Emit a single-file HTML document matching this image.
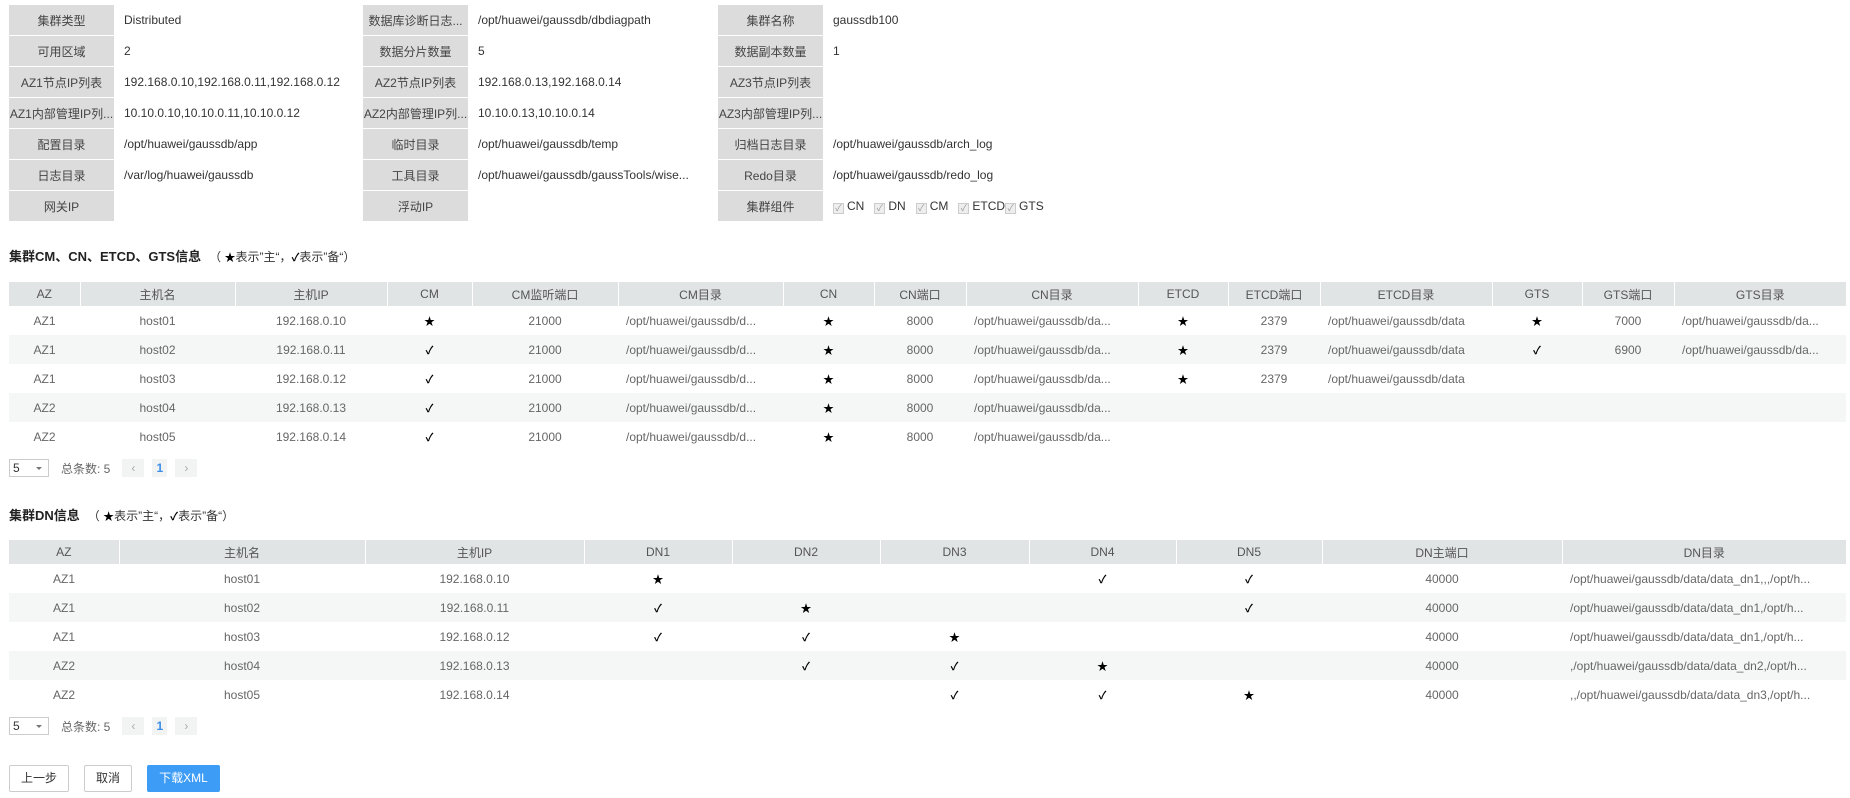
<!DOCTYPE html>
<html><head><meta charset="utf-8"><style>
*{box-sizing:border-box;margin:0;padding:0}
body{width:1850px;height:798px;background:#fff;font-family:"Liberation Sans","Noto Sans CJK SC",sans-serif;font-size:12px;color:#333;position:relative;overflow:hidden}
.info{position:absolute;left:9px;top:4px;border-collapse:separate;border-spacing:0 1px;table-layout:fixed}
.info td{height:30px;white-space:nowrap;overflow:hidden;text-overflow:ellipsis}
.info td.l{background:#dcdcdc;text-align:center;color:#444}
.info td.v{padding-left:10px;color:#333}
.cb{color:#aaa}
.cb span{display:inline-block;width:11px;height:11px;border:1px solid #ccc;background:#eee;font-size:9px;line-height:9px;text-align:center;color:#999;margin-right:3px;vertical-align:-1px}
.title{position:absolute;left:9px;font-weight:bold;font-size:13px;color:#222}
.title i{font-style:normal;font-weight:normal;color:#333;font-size:12px;margin-left:8px}
table.g{position:absolute;left:9px;border-collapse:collapse;table-layout:fixed}
table.g th{background:#e1e4e5;height:24px;font-weight:normal;color:#555;border-left:1px solid #fff;white-space:nowrap}
table.g th:first-child{border-left:none}
table.g td{height:29px;text-align:center;color:#666;white-space:nowrap;overflow:hidden;text-overflow:ellipsis}
table.g tr:nth-child(odd) td{background:#f5f7f7}
table.g td.p{text-align:left;padding-left:8px}
.st{color:#000 !important;font-size:11px}
.ck{color:#000 !important;font-size:11px;font-weight:bold}
.pg{position:absolute;left:9px;height:18px;display:flex;align-items:center;color:#666}
.sel{width:40px;height:18px;border:1px solid #ccc;position:relative;padding-left:3px;line-height:16px;color:#333}
.sel:after{content:"";position:absolute;right:6px;top:7px;border:3px solid transparent;border-top-color:#777}
.pb{width:22px;height:18px;background:#f2f4f4;text-align:center;line-height:18px;color:#aaa;margin-left:8px}
.btn{position:absolute;top:765px;height:27px;border:1px solid #ccc;border-radius:2px;background:#fff;text-align:center;line-height:25px;color:#333}
</style></head><body>
<table class="info">
<colgroup><col style="width:105px"><col style="width:249px"><col style="width:105px"><col style="width:250px"><col style="width:105px"><col style="width:250px"></colgroup>
<tr><td class="l">集群类型</td><td class="v">Distributed</td><td class="l">数据库诊断日志...</td><td class="v">/opt/huawei/gaussdb/dbdiagpath</td><td class="l">集群名称</td><td class="v">gaussdb100</td></tr>
<tr><td class="l">可用区域</td><td class="v">2</td><td class="l">数据分片数量</td><td class="v">5</td><td class="l">数据副本数量</td><td class="v">1</td></tr>
<tr><td class="l">AZ1节点IP列表</td><td class="v">192.168.0.10,192.168.0.11,192.168.0.12</td><td class="l">AZ2节点IP列表</td><td class="v">192.168.0.13,192.168.0.14</td><td class="l">AZ3节点IP列表</td><td class="v"></td></tr>
<tr><td class="l">AZ1内部管理IP列...</td><td class="v">10.10.0.10,10.10.0.11,10.10.0.12</td><td class="l">AZ2内部管理IP列...</td><td class="v">10.10.0.13,10.10.0.14</td><td class="l">AZ3内部管理IP列...</td><td class="v"></td></tr>
<tr><td class="l">配置目录</td><td class="v">/opt/huawei/gaussdb/app</td><td class="l">临时目录</td><td class="v">/opt/huawei/gaussdb/temp</td><td class="l">归档日志目录</td><td class="v">/opt/huawei/gaussdb/arch_log</td></tr>
<tr><td class="l">日志目录</td><td class="v">/var/log/huawei/gaussdb</td><td class="l">工具目录</td><td class="v">/opt/huawei/gaussdb/gaussTools/wise...</td><td class="l">Redo目录</td><td class="v">/opt/huawei/gaussdb/redo_log</td></tr>
<tr><td class="l">网关IP</td><td class="v"></td><td class="l">浮动IP</td><td class="v"></td><td class="l">集群组件</td><td class="v cb"><span>✓</span>CN&nbsp;&nbsp;&nbsp;<span>✓</span>DN&nbsp;&nbsp;&nbsp;<span>✓</span>CM&nbsp;&nbsp;&nbsp;<span>✓</span>ETCD<span>✓</span>GTS</td></tr>
</table>

<div class="title" style="top:246px">集群CM、CN、ETCD、GTS信息<i>（ <span class="st">★</span>表示”主“，<span class="ck">✓</span>表示”备“）</i></div>
<table class="g" style="top:282px;width:1837px">
<colgroup><col style="width:71px"><col style="width:155px"><col style="width:152px"><col style="width:85px"><col style="width:146px"><col style="width:165px"><col style="width:91px"><col style="width:92px"><col style="width:172px"><col style="width:90px"><col style="width:92px"><col style="width:172px"><col style="width:90px"><col style="width:92px"><col style="width:172px"></colgroup>
<tr><th>AZ</th><th>主机名</th><th>主机IP</th><th>CM</th><th>CM监听端口</th><th>CM目录</th><th>CN</th><th>CN端口</th><th>CN目录</th><th>ETCD</th><th>ETCD端口</th><th>ETCD目录</th><th>GTS</th><th>GTS端口</th><th>GTS目录</th></tr>
<tbody>
<tr style="display:none"></tr>
<tr><td>AZ1</td><td>host01</td><td>192.168.0.10</td><td class="st">★</td><td>21000</td><td class="p">/opt/huawei/gaussdb/d...</td><td class="st">★</td><td>8000</td><td class="p">/opt/huawei/gaussdb/da...</td><td class="st">★</td><td>2379</td><td class="p">/opt/huawei/gaussdb/data</td><td class="st">★</td><td>7000</td><td class="p">/opt/huawei/gaussdb/da...</td></tr>
<tr><td>AZ1</td><td>host02</td><td>192.168.0.11</td><td class="ck">✓</td><td>21000</td><td class="p">/opt/huawei/gaussdb/d...</td><td class="st">★</td><td>8000</td><td class="p">/opt/huawei/gaussdb/da...</td><td class="st">★</td><td>2379</td><td class="p">/opt/huawei/gaussdb/data</td><td class="ck">✓</td><td>6900</td><td class="p">/opt/huawei/gaussdb/da...</td></tr>
<tr><td>AZ1</td><td>host03</td><td>192.168.0.12</td><td class="ck">✓</td><td>21000</td><td class="p">/opt/huawei/gaussdb/d...</td><td class="st">★</td><td>8000</td><td class="p">/opt/huawei/gaussdb/da...</td><td class="st">★</td><td>2379</td><td class="p">/opt/huawei/gaussdb/data</td><td></td><td></td><td></td></tr>
<tr><td>AZ2</td><td>host04</td><td>192.168.0.13</td><td class="ck">✓</td><td>21000</td><td class="p">/opt/huawei/gaussdb/d...</td><td class="st">★</td><td>8000</td><td class="p">/opt/huawei/gaussdb/da...</td><td></td><td></td><td></td><td></td><td></td><td></td></tr>
<tr><td>AZ2</td><td>host05</td><td>192.168.0.14</td><td class="ck">✓</td><td>21000</td><td class="p">/opt/huawei/gaussdb/d...</td><td class="st">★</td><td>8000</td><td class="p">/opt/huawei/gaussdb/da...</td><td></td><td></td><td></td><td></td><td></td><td></td></tr>
</tbody></table>
<div class="pg" style="top:459px"><div class="sel">5</div><span style="margin-left:12px">总条数: 5</span><div class="pb" style="margin-left:12px">‹</div><div class="pb" style="width:15px;color:#3d8ee8;font-weight:bold">1</div><div class="pb">›</div></div>

<div class="title" style="top:505px">集群DN信息<i>（ <span class="st">★</span>表示”主“，<span class="ck">✓</span>表示”备“）</i></div>
<table class="g" style="top:540px;width:1837px">
<colgroup><col style="width:110px"><col style="width:246px"><col style="width:219px"><col style="width:148px"><col style="width:148px"><col style="width:149px"><col style="width:147px"><col style="width:146px"><col style="width:240px"><col style="width:284px"></colgroup>
<tr><th>AZ</th><th>主机名</th><th>主机IP</th><th>DN1</th><th>DN2</th><th>DN3</th><th>DN4</th><th>DN5</th><th>DN主端口</th><th>DN目录</th></tr>
<tbody>
<tr style="display:none"></tr>
<tr><td>AZ1</td><td>host01</td><td>192.168.0.10</td><td class="st">★</td><td></td><td></td><td class="ck">✓</td><td class="ck">✓</td><td>40000</td><td class="p">/opt/huawei/gaussdb/data/data_dn1,,,/opt/h...</td></tr>
<tr><td>AZ1</td><td>host02</td><td>192.168.0.11</td><td class="ck">✓</td><td class="st">★</td><td></td><td></td><td class="ck">✓</td><td>40000</td><td class="p">/opt/huawei/gaussdb/data/data_dn1,/opt/h...</td></tr>
<tr><td>AZ1</td><td>host03</td><td>192.168.0.12</td><td class="ck">✓</td><td class="ck">✓</td><td class="st">★</td><td></td><td></td><td>40000</td><td class="p">/opt/huawei/gaussdb/data/data_dn1,/opt/h...</td></tr>
<tr><td>AZ2</td><td>host04</td><td>192.168.0.13</td><td></td><td class="ck">✓</td><td class="ck">✓</td><td class="st">★</td><td></td><td>40000</td><td class="p">,/opt/huawei/gaussdb/data/data_dn2,/opt/h...</td></tr>
<tr><td>AZ2</td><td>host05</td><td>192.168.0.14</td><td></td><td></td><td class="ck">✓</td><td class="ck">✓</td><td class="st">★</td><td>40000</td><td class="p">,,/opt/huawei/gaussdb/data/data_dn3,/opt/h...</td></tr>
</tbody></table>
<div class="pg" style="top:717px"><div class="sel">5</div><span style="margin-left:12px">总条数: 5</span><div class="pb" style="margin-left:12px">‹</div><div class="pb" style="width:15px;color:#3d8ee8;font-weight:bold">1</div><div class="pb">›</div></div>

<div class="btn" style="left:9px;width:60px">上一步</div>
<div class="btn" style="left:84px;width:48px">取消</div>
<div class="btn" style="left:147px;width:73px;background:#3d9cf5;border-color:#3d9cf5;color:#fff">下载XML</div>
</body></html>
